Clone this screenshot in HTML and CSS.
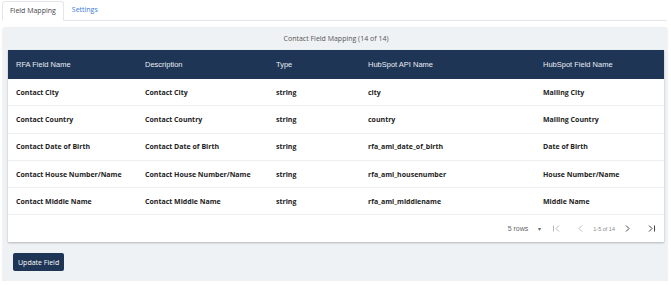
FILE: index.html
```html
<!DOCTYPE html>
<html lang="en">
<head>
    <meta charset="UTF-8">
    <title>Field Mapping</title>
    <link rel="stylesheet" href="styles.css">
</head>
<body>
    <div class="tabs">
        <span class="tab active">Field Mapping</span>
        <span class="tab">Settings</span>
    </div>
    <div class="panel">
        <div class="caption">Contact Field Mapping (14 of 14)</div>
        <div class="card">
            <table class="map-table">
                <colgroup>
                    <col style="width:129px">
                    <col style="width:131px">
                    <col style="width:92px">
                    <col style="width:175px">
                    <col>
                </colgroup>
                <tr>
                    <th>RFA Field Name</th>
                    <th>Description</th>
                    <th>Type</th>
                    <th>HubSpot API Name</th>
                    <th>HubSpot Field Name</th>
                </tr>
                <tr>
                    <td>Contact City</td>
                    <td>Contact City</td>
                    <td>string</td>
                    <td>city</td>
                    <td>Mailing City</td>
                </tr>
                <tr>
                    <td>Contact Country</td>
                    <td>Contact Country</td>
                    <td>string</td>
                    <td>country</td>
                    <td>Mailing Country</td>
                </tr>
                <tr>
                    <td>Contact Date of Birth</td>
                    <td>Contact Date of Birth</td>
                    <td>string</td>
                    <td>rfa_aml_date_of_birth</td>
                    <td>Date of Birth</td>
                </tr>
                <tr>
                    <td>Contact House Number/Name</td>
                    <td>Contact House Number/Name</td>
                    <td>string</td>
                    <td>rfa_aml_housenumber</td>
                    <td>House Number/Name</td>
                </tr>
                <tr>
                    <td>Contact Middle Name</td>
                    <td>Contact Middle Name</td>
                    <td>string</td>
                    <td>rfa_aml_middlename</td>
                    <td>Middle Name</td>
                </tr>
            </table>
            <div class="pager">
                <span class="rows">5 rows</span>
                <span class="caret">&#9662;</span>
                <span class="pg-btn off">
                    <svg width="9" height="9" viewBox="0 0 9 9"><path d="M1.5 1.5v6M7 1.5L4 4.5l3 3" fill="none" stroke="currentColor" stroke-width="1"/></svg>
                </span>
                <span class="pg-btn off">
                    <svg width="9" height="9" viewBox="0 0 9 9"><path d="M6 1.5L3 4.5l3 3" fill="none" stroke="currentColor" stroke-width="1"/></svg>
                </span>
                <span class="range">1-5 of 14</span>
                <span class="pg-btn">
                    <svg width="9" height="9" viewBox="0 0 9 9"><path d="M3 1.5l3 3-3 3" fill="none" stroke="currentColor" stroke-width="1"/></svg>
                </span>
                <span class="pg-btn">
                    <svg width="9" height="9" viewBox="0 0 9 9"><path d="M2 1.5l3 3-3 3M7.5 1.5v6" fill="none" stroke="currentColor" stroke-width="1"/></svg>
                </span>
            </div>
        </div>
        <button class="btn">Update Field</button>
    </div>
</body>
</html>
```
FILE: styles.css
```css
body {
    font-family: "Open Sans", "Noto Sans", sans-serif;
    margin: 0;
    padding: 0 4px 0 2px;
    background: white;
    color: #222;
}
.tabs {
    display: flex;
    height: 19px;
    border-bottom: 1px solid #e3e6ea;
    padding-top: 1px;
}
.tab {
    font-size: 7px;
    color: #3b7ddd;
    padding: 0 8px;
    line-height: 18px;
}
.tab.active {
    color: #444;
    background: white;
    border: 1px solid #e3e6ea;
    border-bottom: 1px solid white;
    border-radius: 3px 3px 0 0;
    margin-bottom: -1px;
    padding: 0 7px;
}
.panel {
    margin: 6px 0 0 1px;
    background: #eff2f5;
    padding: 0 3px 10px 5px;
    box-shadow: 0 1px 2px rgba(0, 0, 0, 0.18);
    border-radius: 2px;
}
.caption {
    height: 23px;
    line-height: 24px;
    text-align: center;
    font-size: 7px;
    color: #555;
}
.card {
    background: white;
    box-shadow: 0 1px 2px rgba(0, 0, 0, 0.25);
}
.map-table {
    width: 100%;
    border-collapse: collapse;
    table-layout: fixed;
}
.map-table th {
    background: #1e3556;
    color: #e8ecf2;
    font-family: "Liberation Sans", Arial, sans-serif;
    font-weight: normal;
    font-size: 7.5px;
    text-align: left;
    height: 29px;
    padding: 0 8px;
}
.map-table td {
    font-size: 7px;
    font-weight: bold;
    color: #222;
    height: 26.3px;
    padding: 0 8px;
    border-bottom: 1px solid #eceef0;
    white-space: nowrap;
}
.pager {
    display: flex;
    justify-content: flex-end;
    align-items: center;
    height: 27px;
    font-family: "Liberation Sans", Arial, sans-serif;
    font-size: 7px;
    color: #666;
    padding-right: 6px;
}
.caret {
    font-size: 6px;
    margin: 0 8px 0 10px;
}
.pg-btn {
    display: flex;
    width: 14px;
    justify-content: center;
    color: #444;
}
.pg-btn + .pg-btn {
    margin-left: 10px;
}
.pg-btn.off {
    color: #bbb;
}
.range {
    font-size: 5.5px;
    color: #888;
    margin: 0 5px 0 6px;
}
.btn {
    display: block;
    margin: 11px 0 0 5px;
    background: #1e3556;
    color: white;
    border: none;
    border-radius: 2px;
    font-family: "Open Sans", sans-serif;
    font-size: 7px;
    height: 18px;
    padding: 0 5px;
}
```
